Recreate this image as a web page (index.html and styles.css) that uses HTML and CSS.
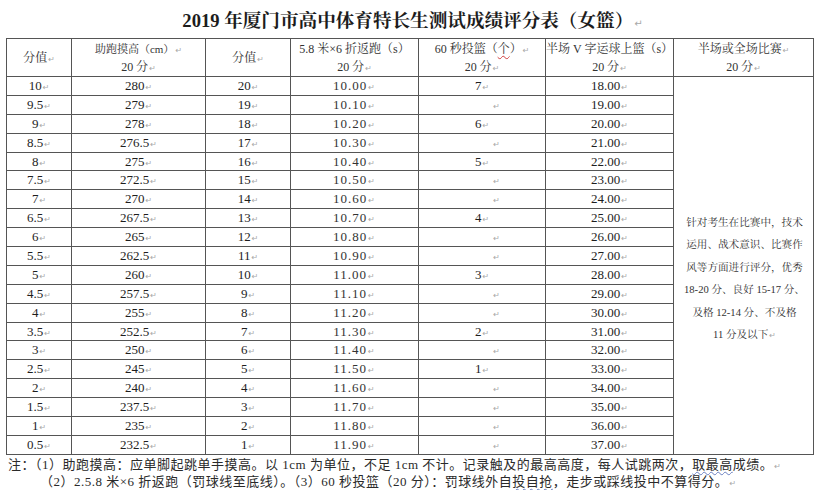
FILE: index.html
```html
<!DOCTYPE html>
<html lang="zh">
<head>
<meta charset="utf-8">
<link rel="stylesheet" href="styles.css">
</head>
<body>
<h1 class="title">2019 年厦门市高中体育特长生测试成绩评分表（女篮）<span class="m">↵</span></h1>
<table class="score">
<colgroup>
<col class="c1"><col class="c2"><col class="c3"><col class="c4"><col class="c5"><col class="c6"><col class="c7">
</colgroup>
<thead>
<tr class="head">
<th>分值<span class="m">↵</span></th>
<th><span class="small">助跑摸高（cm）</span><span class="m">↵</span><br>20 分<span class="m">↵</span></th>
<th>分值<span class="m">↵</span></th>
<th>5.8 米×6 折返跑（s）<br>20 分<span class="m">↵</span></th>
<th>60 秒投篮（<span class="squig">个</span>）<span class="m">↵</span><br>20 分<span class="m">↵</span></th>
<th>半场 V 字运球上篮（s）<br>20 分<span class="m">↵</span></th>
<th>半场或全场比赛<span class="m">↵</span><br>20 分<span class="m">↵</span></th>
</tr>
</thead>
<tbody>
<tr><td>10<span class="m">↵</span></td><td>280<span class="m">↵</span></td><td>20<span class="m">↵</span></td><td class="sim">10.00<span class="m">↵</span></td><td>7<span class="m">↵</span></td><td>18.00<span class="m">↵</span></td>
<td class="match" rowspan="20"><p>针对考生在比赛中，技术<br>运用、战术意识、比赛作<br>风等方面进行评分，优秀<br>18-20 分、良好 15-17 分、<br>及格 12-14 分、不及格<br>11 分及以下<span class="m">↵</span></p></td></tr>
<tr><td>9.5<span class="m">↵</span></td><td>279<span class="m">↵</span></td><td>19<span class="m">↵</span></td><td class="sim">10.10<span class="m">↵</span></td><td><span class="m e">↵</span></td><td>19.00<span class="m">↵</span></td></tr>
<tr><td>9<span class="m">↵</span></td><td>278<span class="m">↵</span></td><td>18<span class="m">↵</span></td><td class="sim">10.20<span class="m">↵</span></td><td>6<span class="m">↵</span></td><td>20.00<span class="m">↵</span></td></tr>
<tr><td>8.5<span class="m">↵</span></td><td>276.5<span class="m">↵</span></td><td>17<span class="m">↵</span></td><td class="sim">10.30<span class="m">↵</span></td><td><span class="m e">↵</span></td><td>21.00<span class="m">↵</span></td></tr>
<tr><td>8<span class="m">↵</span></td><td>275<span class="m">↵</span></td><td>16<span class="m">↵</span></td><td class="sim">10.40<span class="m">↵</span></td><td>5<span class="m">↵</span></td><td>22.00<span class="m">↵</span></td></tr>
<tr><td>7.5<span class="m">↵</span></td><td>272.5<span class="m">↵</span></td><td>15<span class="m">↵</span></td><td class="sim">10.50<span class="m">↵</span></td><td><span class="m e">↵</span></td><td>23.00<span class="m">↵</span></td></tr>
<tr><td>7<span class="m">↵</span></td><td>270<span class="m">↵</span></td><td>14<span class="m">↵</span></td><td class="sim">10.60<span class="m">↵</span></td><td><span class="m e">↵</span></td><td>24.00<span class="m">↵</span></td></tr>
<tr><td>6.5<span class="m">↵</span></td><td>267.5<span class="m">↵</span></td><td>13<span class="m">↵</span></td><td class="sim">10.70<span class="m">↵</span></td><td>4<span class="m">↵</span></td><td>25.00<span class="m">↵</span></td></tr>
<tr><td>6<span class="m">↵</span></td><td>265<span class="m">↵</span></td><td>12<span class="m">↵</span></td><td class="sim">10.80<span class="m">↵</span></td><td><span class="m e">↵</span></td><td>26.00<span class="m">↵</span></td></tr>
<tr><td>5.5<span class="m">↵</span></td><td>262.5<span class="m">↵</span></td><td>11<span class="m">↵</span></td><td class="sim">10.90<span class="m">↵</span></td><td><span class="m e">↵</span></td><td>27.00<span class="m">↵</span></td></tr>
<tr><td>5<span class="m">↵</span></td><td>260<span class="m">↵</span></td><td>10<span class="m">↵</span></td><td class="sim">11.00<span class="m">↵</span></td><td>3<span class="m">↵</span></td><td>28.00<span class="m">↵</span></td></tr>
<tr><td>4.5<span class="m">↵</span></td><td>257.5<span class="m">↵</span></td><td>9<span class="m">↵</span></td><td class="sim">11.10<span class="m">↵</span></td><td><span class="m e">↵</span></td><td>29.00<span class="m">↵</span></td></tr>
<tr><td>4<span class="m">↵</span></td><td>255<span class="m">↵</span></td><td>8<span class="m">↵</span></td><td class="sim">11.20<span class="m">↵</span></td><td><span class="m e">↵</span></td><td>30.00<span class="m">↵</span></td></tr>
<tr><td>3.5<span class="m">↵</span></td><td>252.5<span class="m">↵</span></td><td>7<span class="m">↵</span></td><td class="sim">11.30<span class="m">↵</span></td><td>2<span class="m">↵</span></td><td>31.00<span class="m">↵</span></td></tr>
<tr><td>3<span class="m">↵</span></td><td>250<span class="m">↵</span></td><td>6<span class="m">↵</span></td><td class="sim">11.40<span class="m">↵</span></td><td><span class="m e">↵</span></td><td>32.00<span class="m">↵</span></td></tr>
<tr><td>2.5<span class="m">↵</span></td><td>245<span class="m">↵</span></td><td>5<span class="m">↵</span></td><td class="sim">11.50<span class="m">↵</span></td><td>1<span class="m">↵</span></td><td>33.00<span class="m">↵</span></td></tr>
<tr><td>2<span class="m">↵</span></td><td>240<span class="m">↵</span></td><td>4<span class="m">↵</span></td><td class="sim">11.60<span class="m">↵</span></td><td><span class="m e">↵</span></td><td>34.00<span class="m">↵</span></td></tr>
<tr><td>1.5<span class="m">↵</span></td><td>237.5<span class="m">↵</span></td><td>3<span class="m">↵</span></td><td class="sim">11.70<span class="m">↵</span></td><td><span class="m e">↵</span></td><td>35.00<span class="m">↵</span></td></tr>
<tr><td>1<span class="m">↵</span></td><td>235<span class="m">↵</span></td><td>2<span class="m">↵</span></td><td class="sim">11.80<span class="m">↵</span></td><td><span class="m e">↵</span></td><td>36.00<span class="m">↵</span></td></tr>
<tr><td>0.5<span class="m">↵</span></td><td>232.5<span class="m">↵</span></td><td>1<span class="m">↵</span></td><td class="sim">11.90<span class="m">↵</span></td><td><span class="m e">↵</span></td><td>37.00<span class="m">↵</span></td></tr>
</tbody>
</table>
<div class="notes">
<p class="n1">注：（1）助跑摸高：应单脚起跳单手摸高。以 1cm 为单位，不足 1cm 不计。记录触及的最高高度，每人试跳两次，<span class="squig">取最高</span>成绩。<span class="m">↵</span></p>
<p class="n2">（2）2.5.8 米×6 折返跑（罚球线至底线）。（3）60 秒投篮（20 分）：罚球线外自<span class="squig">投自抢</span>，走步或踩线投中不算得分。<span class="m">↵</span></p>
</div>
</body>
</html>
```
FILE: styles.css
```css
html, body {
  margin: 0;
  padding: 0;
  background: #fff;
}
body {
  padding: 0 5px 0 6px;
  color: #222;
  font-family: "Liberation Serif", "Noto Serif CJK SC", "Noto Sans CJK SC", serif;
}
.title {
  margin: 0;
  height: 38px;
  line-height: 42px;
  font-size: 18.6px;
  font-weight: bold;
  text-align: center;
  padding-left: 6px;
  color: #1c1c1c;
  white-space: nowrap;
}
.title .m {
  font-weight: normal;
  font-size: 10px;
}
.m {
  color: #a8a8a8;
  font-size: 8px;
  line-height: 0;
  font-family: "DejaVu Sans", sans-serif;
  margin-left: 1px;
}
.m.e {
  padding-left: 28px;
}
.score {
  width: 807px;
  table-layout: fixed;
  border-collapse: collapse;
  border: 1.5px solid #4a4a4a;
}
.c1 { width: 65px; }
.c2 { width: 134px; }
.c3 { width: 85px; }
.c4 { width: 128px; }
.c5 { width: 127px; }
.c6 { width: 128px; }
.c7 { width: 140px; }
.score th, .score td {
  border: 1px solid #555;
  padding: 0;
  text-align: center;
  vertical-align: middle;
}
.head {
  height: 38px;
}
.head th {
  font-weight: normal;
  font-size: 12px;
  line-height: 18px;
  color: #333;
  white-space: nowrap;
  overflow: hidden;
}
.small {
  font-size: 11px;
}
.score tbody tr {
  height: 18.9px;
}
.score td {
  font-size: 13px;
  line-height: 14px;
  color: #1e1e1e;
}
.score td.sim {
  letter-spacing: 1px;
  color: #333;
}
.score td.match {
  padding: 28px 2px 0 4px;
  font-size: 10.6px;
  line-height: 22.5px;
  color: #333;
  white-space: nowrap;
}
.match p {
  margin: 0;
}
.squig {
  text-decoration: underline wavy #d04040;
  text-decoration-thickness: 1px;
  text-underline-offset: 2px;
}
.notes {
  font-size: 13px;
  line-height: 17px;
  color: #2a2a2a;
  font-family: "Liberation Serif", "Noto Sans CJK SC", serif;
}
.notes p {
  margin: 0;
  white-space: nowrap;
}
.n1 {
  padding-left: 2px;
  padding-top: 1px;
  letter-spacing: 0.5px;
}
.n2 {
  padding-left: 34px;
  letter-spacing: 0.5px;
}
.notes .squig {
  text-decoration-color: #6a7fc0;
}
```
